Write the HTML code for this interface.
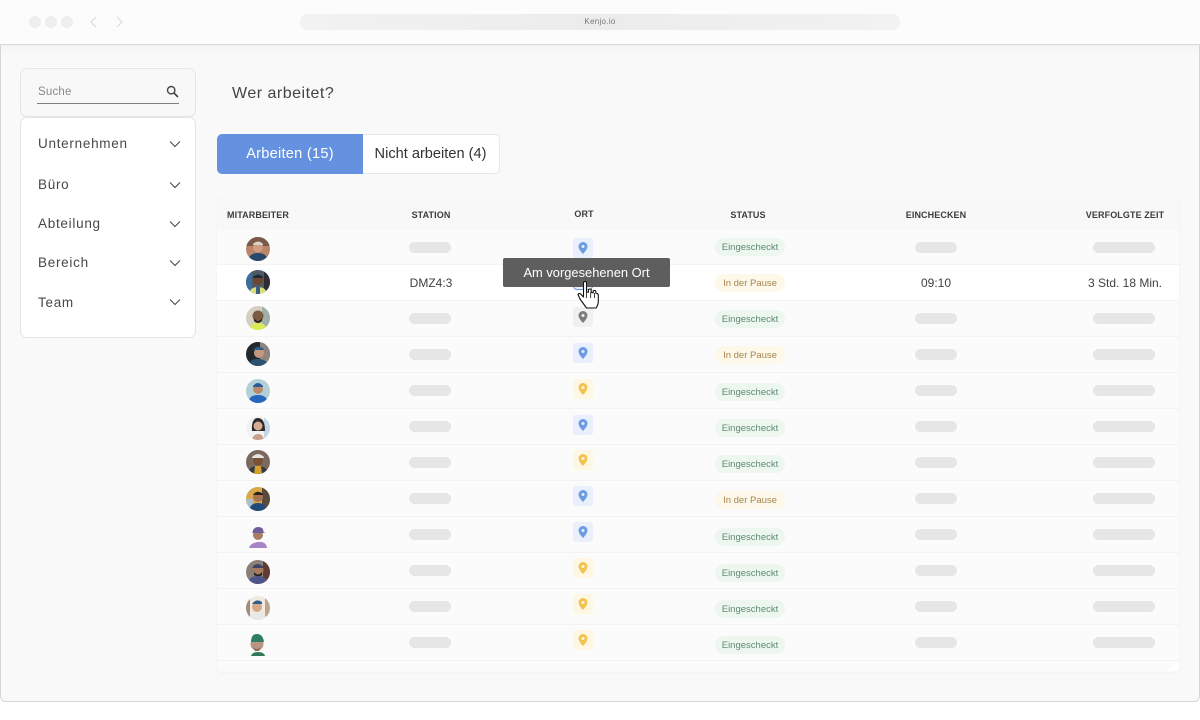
<!DOCTYPE html>
<html lang="de"><head><meta charset="utf-8"><title>Kenjo.io</title>
<style>
*{box-sizing:border-box}
html,body{margin:0;padding:0;width:1200px;height:720px;overflow:hidden;background:#fff;font-family:"Liberation Sans",sans-serif}
#win{position:absolute;left:0;top:0;width:1200px;height:702px;background:#f9f9f9;border:1px solid #d6d6d6;border-top:0;border-radius:0 0 6px 6px;overflow:hidden}
#bar{position:absolute;left:-1px;top:0;width:1202px;height:45px;background:#fcfcfc;border-bottom:1px solid #d9d9d9;box-shadow:0 2px 6px rgba(0,0,0,.04)}
.a{position:absolute}
.dot{position:absolute;width:12px;height:12px;border-radius:50%;background:#eeeeee;top:16px}
#search{position:absolute;left:20px;top:68px;width:176px;height:49px;background:#f8f8f8;border:1px solid #e5e5e5;border-radius:7px}
#filter{position:absolute;left:20px;top:117px;width:176px;height:221px;background:#fff;border:1px solid #e5e5e5;border-radius:7px}
.fl{position:absolute;left:38px;font-size:13.5px;letter-spacing:.72px;color:#484848;line-height:16px}
.ch{position:absolute;left:169px;width:12px;height:8px}
.tab{position:absolute;top:134px;height:40px;font-size:14.6px;line-height:41px;text-align:center;white-space:nowrap}
#table{position:absolute;left:217px;top:197px;width:962px;height:475px;background:#fbfbfb;border-radius:0 0 6px 6px;box-shadow:0 1px 3px rgba(0,0,0,.04)}
#head{position:absolute;left:217px;top:197px;width:962px;height:33px;background:#f8f8f8}
.h{position:absolute;font-size:9px;font-weight:bold;color:#3c3c3c;line-height:11px;letter-spacing:.1px;white-space:nowrap;text-align:center;width:120px}
.ln{position:absolute;left:217px;width:962px;height:1px;background:#f3f3f3}
.p{position:absolute;height:11px;border-radius:6px;background:#e6e6e6}
.s1{left:409px;width:42px}.s2{left:915px;width:42px}.s3{left:1093px;width:62px}
.b{position:absolute;left:715px;width:70px;height:18px;border-radius:9px;font-size:9.5px;line-height:19px;text-align:center;white-space:nowrap}
.g{background:#edf6ef;color:#5d8b71}
.y{background:#fdf8ea;color:#a58650}
.l{position:absolute;left:573px;width:20px;height:20px;border-radius:3px}
.l svg{position:absolute;left:4px;top:3px;width:12px;height:14px}
.lb{background:#e9f0fb;color:#6c9be6}
.ly{background:#fdf7e4;color:#f5c34d}
.lg{background:#f0f0f0;color:#7c7c7c}
.av{position:absolute;left:246px;width:24px;height:24px}
.t{position:absolute;font-size:12px;color:#3f3f3f;line-height:14px;white-space:nowrap;text-align:center}
</style></head><body>
<div id="win"></div>
<div id="bar"></div>
<div class="dot" style="left:29px"></div><div class="dot" style="left:45px"></div><div class="dot" style="left:61px"></div>
<svg class="a" style="left:88px;top:15px" width="12" height="14" viewBox="0 0 12 14"><path d="M8 2 3 7l5 5" fill="none" stroke="#dcdcdc" stroke-width="1.2"/></svg>
<svg class="a" style="left:113px;top:15px" width="12" height="14" viewBox="0 0 12 14"><path d="M4 2l5 5-5 5" fill="none" stroke="#dcdcdc" stroke-width="1.2"/></svg>
<div class="a" style="left:300px;top:14px;width:600px;height:16px;border-radius:8px;background:linear-gradient(90deg,#f2f2f2,#ececec 50%,#f2f2f2);font-size:8px;line-height:16px;text-align:center;color:#777;letter-spacing:.3px">Kenjo.io</div>

<div id="search"></div>
<div class="a" style="left:38px;top:85px;font-size:11.5px;line-height:14px;color:#888;letter-spacing:.2px">Suche</div>
<div class="a" style="left:37px;top:103px;width:142px;height:1px;background:#7d7d7d"></div>
<svg class="a" style="left:166px;top:85px" width="13" height="13" viewBox="0 0 13 13"><circle cx="5.2" cy="5.2" r="3.7" fill="none" stroke="#444" stroke-width="1.4"/><path d="M8 8l4 4" stroke="#444" stroke-width="1.6"/></svg>
<div id="filter"></div>
<div class="fl" style="top:136px">Unternehmen</div>
<div class="fl" style="top:177px">Büro</div>
<div class="fl" style="top:216px">Abteilung</div>
<div class="fl" style="top:255px">Bereich</div>
<div class="fl" style="top:295px">Team</div>
<svg class="ch" style="top:140px" viewBox="0 0 12 8"><path d="M1 1.5l5 5 5-5" fill="none" stroke="#444" stroke-width="1"/></svg>
<svg class="ch" style="top:181px" viewBox="0 0 12 8"><path d="M1 1.5l5 5 5-5" fill="none" stroke="#444" stroke-width="1"/></svg>
<svg class="ch" style="top:220px" viewBox="0 0 12 8"><path d="M1 1.5l5 5 5-5" fill="none" stroke="#444" stroke-width="1"/></svg>
<svg class="ch" style="top:259px" viewBox="0 0 12 8"><path d="M1 1.5l5 5 5-5" fill="none" stroke="#444" stroke-width="1"/></svg>
<svg class="ch" style="top:298px" viewBox="0 0 12 8"><path d="M1 1.5l5 5 5-5" fill="none" stroke="#444" stroke-width="1"/></svg>

<div class="a" style="left:232px;top:84px;font-size:16px;line-height:19px;color:#444;letter-spacing:.5px">Wer arbeitet?</div>
<div class="tab" style="left:217px;width:146px;background:#6592e0;color:#fff;border-radius:5px 0 0 5px;letter-spacing:.25px">Arbeiten (15)</div>
<div class="tab" style="left:363px;width:137px;background:#fff;color:#333;border:1px solid #e7e7e7;border-left:0;border-radius:0 5px 5px 0;padding-right:1px;line-height:39px">Nicht arbeiten (4)</div>

<div id="table"></div>
<div id="head"></div>
<svg class="a" style="left:1165px;top:660px" width="14" height="12" viewBox="0 0 14 12"><path d="M14 1v7q0 3-3 3H2z" fill="#fff"/></svg>
<div class="h" style="left:198px;top:210px">MITARBEITER</div>
<div class="h" style="left:371px;top:210px">STATION</div>
<div class="h" style="left:524px;top:209px">ORT</div>
<div class="h" style="left:688px;top:210px">STATUS</div>
<div class="h" style="left:876px;top:210px">EINCHECKEN</div>
<div class="h" style="left:1065px;top:210px">VERFOLGTE ZEIT</div>

<div class="a" style="left:217px;top:265px;width:962px;height:35px;background:#fff"></div>
<div class="ln" style="top:264px"></div><div class="ln" style="top:300px"></div><div class="ln" style="top:336px"></div><div class="ln" style="top:372px"></div><div class="ln" style="top:408px"></div><div class="ln" style="top:444px"></div><div class="ln" style="top:480px"></div><div class="ln" style="top:516px"></div><div class="ln" style="top:552px"></div><div class="ln" style="top:588px"></div><div class="ln" style="top:624px"></div><div class="ln" style="top:660px"></div>

<!-- station pills -->
<div class="p s1" style="top:242px"></div><div class="p s1" style="top:313px"></div><div class="p s1" style="top:349px"></div><div class="p s1" style="top:385px"></div><div class="p s1" style="top:421px"></div><div class="p s1" style="top:457px"></div><div class="p s1" style="top:493px"></div><div class="p s1" style="top:529px"></div><div class="p s1" style="top:565px"></div><div class="p s1" style="top:601px"></div><div class="p s1" style="top:637px"></div>
<div class="p s2" style="top:242px"></div><div class="p s2" style="top:313px"></div><div class="p s2" style="top:349px"></div><div class="p s2" style="top:385px"></div><div class="p s2" style="top:421px"></div><div class="p s2" style="top:457px"></div><div class="p s2" style="top:493px"></div><div class="p s2" style="top:529px"></div><div class="p s2" style="top:565px"></div><div class="p s2" style="top:601px"></div><div class="p s2" style="top:637px"></div>
<div class="p s3" style="top:242px"></div><div class="p s3" style="top:313px"></div><div class="p s3" style="top:349px"></div><div class="p s3" style="top:385px"></div><div class="p s3" style="top:421px"></div><div class="p s3" style="top:457px"></div><div class="p s3" style="top:493px"></div><div class="p s3" style="top:529px"></div><div class="p s3" style="top:565px"></div><div class="p s3" style="top:601px"></div><div class="p s3" style="top:637px"></div>

<div class="t" style="left:391px;top:276px;width:80px">DMZ4:3</div>
<div class="t" style="left:896px;top:276px;width:80px">09:10</div>
<div class="t" style="left:1065px;top:276px;width:120px">3 Std. 18 Min.</div>

<!-- status -->
<div class="b g" style="top:238px">Eingescheckt</div>
<div class="b y" style="top:274px">In der Pause</div>
<div class="b g" style="top:310px">Eingescheckt</div>
<div class="b y" style="top:346px">In der Pause</div>
<div class="b g" style="top:383px">Eingescheckt</div>
<div class="b g" style="top:419px">Eingescheckt</div>
<div class="b g" style="top:455px">Eingescheckt</div>
<div class="b y" style="top:491px">In der Pause</div>
<div class="b g" style="top:528px">Eingescheckt</div>
<div class="b g" style="top:564px">Eingescheckt</div>
<div class="b g" style="top:600px">Eingescheckt</div>
<div class="b g" style="top:636px">Eingescheckt</div>

<!-- location icons -->
<div class="l lb" style="top:238px"><svg viewBox="0 0 12 14"><path fill="currentColor" fill-rule="evenodd" d="M6 1a4.5 4.5 0 0 0-4.5 4.5C1.500 8.500 6 13 6 13s4.500-4.500 4.500-7.500A4.500 4.500 0 0 0 6 1zm0 3a1.500 1.500 0 1 1 0 3 1.500 1.500 0 0 1 0-3z"/></svg></div>
<div class="a" style="left:573px;top:270px;width:20px;height:20px;border:1px solid #6c9be6;border-radius:4px;background:#e9f0fb"></div>
<div class="l lg" style="top:307px"><svg viewBox="0 0 12 14"><path fill="currentColor" fill-rule="evenodd" d="M6 1a4.5 4.5 0 0 0-4.5 4.5C1.500 8.500 6 13 6 13s4.500-4.500 4.500-7.500A4.500 4.500 0 0 0 6 1zm0 3a1.500 1.500 0 1 1 0 3 1.500 1.500 0 0 1 0-3z"/></svg></div>
<div class="l lb" style="top:343px"><svg viewBox="0 0 12 14"><path fill="currentColor" fill-rule="evenodd" d="M6 1a4.5 4.5 0 0 0-4.5 4.5C1.500 8.500 6 13 6 13s4.500-4.500 4.500-7.500A4.500 4.500 0 0 0 6 1zm0 3a1.500 1.500 0 1 1 0 3 1.500 1.500 0 0 1 0-3z"/></svg></div>
<div class="l ly" style="top:379px"><svg viewBox="0 0 12 14"><path fill="currentColor" fill-rule="evenodd" d="M6 1a4.5 4.5 0 0 0-4.5 4.5C1.500 8.500 6 13 6 13s4.500-4.500 4.500-7.500A4.500 4.500 0 0 0 6 1zm0 3a1.500 1.500 0 1 1 0 3 1.500 1.500 0 0 1 0-3z"/></svg></div>
<div class="l lb" style="top:415px"><svg viewBox="0 0 12 14"><path fill="currentColor" fill-rule="evenodd" d="M6 1a4.5 4.5 0 0 0-4.5 4.5C1.500 8.500 6 13 6 13s4.500-4.500 4.500-7.500A4.500 4.500 0 0 0 6 1zm0 3a1.500 1.500 0 1 1 0 3 1.500 1.500 0 0 1 0-3z"/></svg></div>
<div class="l ly" style="top:450px"><svg viewBox="0 0 12 14"><path fill="currentColor" fill-rule="evenodd" d="M6 1a4.5 4.5 0 0 0-4.5 4.5C1.500 8.500 6 13 6 13s4.500-4.500 4.500-7.500A4.500 4.500 0 0 0 6 1zm0 3a1.500 1.500 0 1 1 0 3 1.500 1.500 0 0 1 0-3z"/></svg></div>
<div class="l lb" style="top:486px"><svg viewBox="0 0 12 14"><path fill="currentColor" fill-rule="evenodd" d="M6 1a4.5 4.5 0 0 0-4.5 4.5C1.500 8.500 6 13 6 13s4.500-4.500 4.500-7.500A4.500 4.500 0 0 0 6 1zm0 3a1.500 1.500 0 1 1 0 3 1.500 1.500 0 0 1 0-3z"/></svg></div>
<div class="l lb" style="top:522px"><svg viewBox="0 0 12 14"><path fill="currentColor" fill-rule="evenodd" d="M6 1a4.5 4.5 0 0 0-4.5 4.5C1.500 8.500 6 13 6 13s4.500-4.500 4.500-7.500A4.500 4.500 0 0 0 6 1zm0 3a1.500 1.500 0 1 1 0 3 1.500 1.500 0 0 1 0-3z"/></svg></div>
<div class="l ly" style="top:558px"><svg viewBox="0 0 12 14"><path fill="currentColor" fill-rule="evenodd" d="M6 1a4.5 4.5 0 0 0-4.5 4.5C1.500 8.500 6 13 6 13s4.500-4.500 4.500-7.500A4.500 4.500 0 0 0 6 1zm0 3a1.500 1.500 0 1 1 0 3 1.500 1.500 0 0 1 0-3z"/></svg></div>
<div class="l ly" style="top:594px"><svg viewBox="0 0 12 14"><path fill="currentColor" fill-rule="evenodd" d="M6 1a4.5 4.5 0 0 0-4.5 4.5C1.500 8.500 6 13 6 13s4.500-4.500 4.500-7.500A4.500 4.500 0 0 0 6 1zm0 3a1.500 1.500 0 1 1 0 3 1.500 1.500 0 0 1 0-3z"/></svg></div>
<div class="l ly" style="top:630px"><svg viewBox="0 0 12 14"><path fill="currentColor" fill-rule="evenodd" d="M6 1a4.5 4.5 0 0 0-4.5 4.5C1.500 8.500 6 13 6 13s4.500-4.500 4.500-7.500A4.500 4.500 0 0 0 6 1zm0 3a1.500 1.500 0 1 1 0 3 1.500 1.500 0 0 1 0-3z"/></svg></div>

<!-- avatars: simplified portrait shapes -->
<svg class="av" style="top:237px" viewBox="0 0 24 24"><defs><clipPath id="c"><circle cx="12" cy="12" r="12"/></clipPath></defs><g clip-path="url(#c)"><rect width="24" height="24" fill="#b9866b"/><rect width="24" height="9" fill="#7b5a4a"/><circle cx="12" cy="10.500" r="5" fill="#cf9d82"/><path d="M7 7q5-5 10 0v1H7z" fill="#ddd2c8"/><path d="M2 24q1-8 10-8t10 8z" fill="#28476b"/></g></svg>
<svg class="av" style="top:270px" viewBox="0 0 24 24"><g clip-path="url(#c)"><rect width="24" height="24" fill="#4e5a68"/><rect x="0" width="6" height="24" fill="#3d6d9e"/><rect x="18" width="6" height="24" fill="#2d2d33"/><circle cx="12" cy="10" r="5" fill="#6b4630"/><path d="M7 7q5-5 10 0v1H7z" fill="#1d2a38"/><path d="M3 24q1-7 9-7t9 7z" fill="#dadf7e"/><path d="M10 17h4v7h-4z" fill="#3b5d86"/></g></svg>
<svg class="av" style="top:306px" viewBox="0 0 24 24"><g clip-path="url(#c)"><rect width="24" height="24" fill="#d5cfc3"/><rect x="16" width="8" height="24" fill="#9fb0a8"/><circle cx="12" cy="10" r="5.500" fill="#7d5a42"/><path d="M8 12q4 6 8 0v3q-4 4-8 0z" fill="#2b211c"/><path d="M3 24q1-7 9-7t9 7z" fill="#d9ec55"/></g></svg>
<svg class="av" style="top:342px" viewBox="0 0 24 24"><g clip-path="url(#c)"><rect width="24" height="24" fill="#23272e"/><rect x="14" width="10" height="24" fill="#8c8580"/><circle cx="13" cy="11" r="5" fill="#c4987e"/><path d="M7 8q5-6 11-1l-1 1H8z" fill="#2d5d8c"/><path d="M2 24q2-8 11-7t9 7z" fill="#2c5171"/></g></svg>
<svg class="av" style="top:379px" viewBox="0 0 24 24"><g clip-path="url(#c)"><rect width="24" height="24" fill="#b3d0d6"/><circle cx="12" cy="10" r="5" fill="#b98a6e"/><path d="M7 7q5-6 10 0v1H7z" fill="#2c5a9c"/><path d="M2 24q1-8 10-8t10 8z" fill="#2865bd"/></g></svg>
<svg class="av" style="top:416px" viewBox="0 0 24 24"><g clip-path="url(#c)"><rect width="24" height="24" fill="#f1f3f3"/><rect x="18" width="6" height="24" fill="#c4d7e8"/><path d="M6 15q-1-13 6-13t7 13z" fill="#2e2a2b"/><circle cx="12" cy="10" r="4.500" fill="#d7ac94"/><path d="M6 24q1-6 6-6t6 6z" fill="#c7a08e"/></g></svg>
<svg class="av" style="top:450px" viewBox="0 0 24 24"><g clip-path="url(#c)"><rect width="24" height="24" fill="#7d6a5e"/><circle cx="12" cy="10.500" r="5" fill="#7a5136"/><path d="M6 7q6-6 12 0v1H6z" fill="#e5e5e1"/><path d="M2 24q1-8 10-8t10 8z" fill="#2f3b45"/><path d="M8 24l1-8h6l1 8z" fill="#d8a12d"/></g></svg>
<svg class="av" style="top:487px" viewBox="0 0 24 24"><g clip-path="url(#c)"><rect width="24" height="24" fill="#d9a84a"/><rect x="16" width="8" height="24" fill="#584a3c"/><rect y="12" width="7" height="12" fill="#a9bfcb"/><circle cx="12" cy="10" r="5" fill="#a87450"/><path d="M7 8q4-6 10-1v1H7z" fill="#2a211c"/><path d="M3 24q1-8 9-8t9 8z" fill="#234a78"/></g></svg>
<svg class="av" style="top:525px" viewBox="0 0 24 24"><path d="M3 23q1-5 9-6t9 6z" fill="#a883c7"/><circle cx="12" cy="10" r="5" fill="#a97d62"/><path d="M6.500 7q1-5 6-5t5 5l2 1H6.500z" fill="#6f5d9c"/></svg>
<svg class="av" style="top:560px" viewBox="0 0 24 24"><g clip-path="url(#c)"><rect width="24" height="24" fill="#8b8078"/><rect x="17" width="7" height="24" fill="#5e3d30"/><circle cx="12" cy="10" r="5.500" fill="#a67a5e"/><path d="M6.500 7q5-6 11 0v1h-11z" fill="#3b4464"/><path d="M8 12q4 5 8 0v3q-4 3-8 0z" fill="#282220"/><path d="M2 24q1-8 10-8t10 8z" fill="#4d5589"/></g></svg>
<svg class="av" style="top:596px" viewBox="0 0 24 24"><g clip-path="url(#c)"><rect width="24" height="24" fill="#efe9df"/><rect x="0" width="4" height="24" fill="#a08d7a"/><rect x="19" width="5" height="24" fill="#bba68c"/><circle cx="11" cy="11" r="5" fill="#d5a988"/><path d="M6 8q4-6 10-2v2z" fill="#2f5f8d"/><path d="M3 24q1-7 9-7t9 7z" fill="#e8e8e8"/></g></svg>
<svg class="av" style="top:632px" viewBox="0 0 24 24"><path d="M5 24q1-4 7-4t7 4z" fill="#2e7a58"/><circle cx="11" cy="12" r="6.500" fill="#bb9584"/><path d="M5 10q0-8 6-8t7 8z" fill="#2f7d63"/><path d="M7 15q4 4 8 0l-2 4H9z" fill="#8a6a5c"/></svg>

<!-- tooltip + cursor -->
<div class="a" style="left:503px;top:258px;width:167px;height:29px;background:#5e5e5e;border-radius:2px;color:#fff;font-size:12.9px;line-height:29px;text-align:center;white-space:nowrap">Am vorgesehenen Ort</div>
<svg class="a" style="left:577px;top:281px" width="22" height="29" viewBox="0 0 22 29"><path d="M6.500 2q0-1.500 1.500-1.500T9.500 2v9l2 .2V8.500q1.800-1 2.700 0v3l2 .3v-2q1.800-.8 2.600.3v2l1.500.4q1 .5 1 2v6q0 3-2.200 6.500H9.500L3 18 1 13.500q.6-1.500 2.400-.7L6.500 16z" fill="#fff" stroke="#111" stroke-width="1.100" stroke-linejoin="round"/><path d="M9.500 11v6M13.700 11v6M17.500 12v5" stroke="#111" stroke-width=".8"/></svg>
</body></html>
